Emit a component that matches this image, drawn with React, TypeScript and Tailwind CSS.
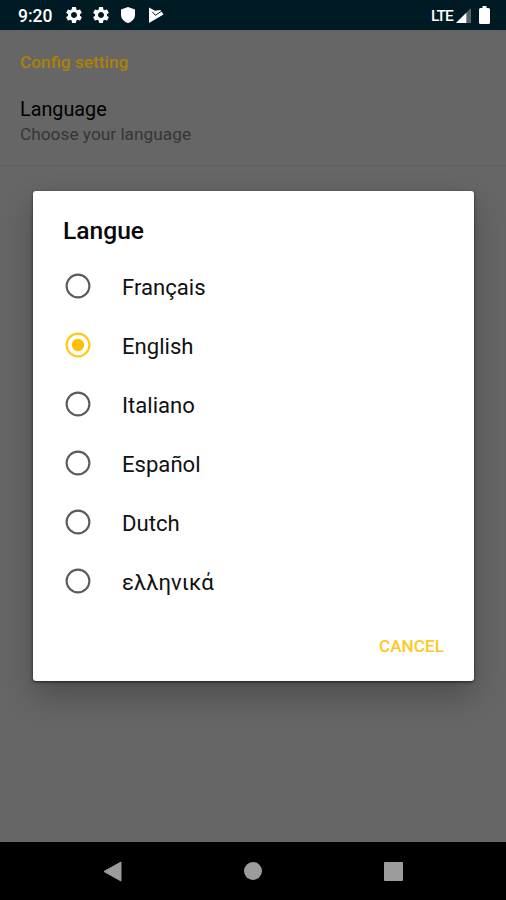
import { MdSettings } from 'react-icons/md';

const languages = ['Français', 'English', 'Italiano', 'Español', 'Dutch', 'ελληνικά'];

function StatusBar() {
  return (
    <header className="flex h-[30px] shrink-0 items-center justify-between bg-[#001a24] pl-[18px] pr-[16px] text-white">
      <div className="flex items-center">
        <span className="w-[46px] pt-[2px] text-[17.5px] font-medium leading-[30px]">9:20</span>
        <MdSettings className="mr-[7px] size-[20px]" />
        <MdSettings className="mr-[10px] size-[20px]" />
        <svg className="mr-[14px] h-[16px] w-[14px]" viewBox="0 0 14 16" fill="currentColor">
          <path d="M7 0 14 2.6V8c0 3.7-2.8 6.6-7 8-4.2-1.4-7-4.3-7-8V2.6Z" />
        </svg>
        <svg className="h-[16px] w-[15px]" viewBox="0 0 15 16" fill="currentColor">
          <path d="M0 0.500 6 3.7 11.500 3 14.500 7.500 0 16Z" />
          <path d="M3.300 4.800 6.400 8.300 13 3.800" fill="none" stroke="#001a24" strokeWidth="1" />
        </svg>
      </div>
      <div className="flex items-center">
        <span className="w-[25px] pt-[1px] text-[15.5px] font-medium leading-[30px] tracking-[-1px]">LTE</span>
        <svg className="mr-[8px] h-[15px] w-[15px]" viewBox="0 0 15 15">
          <path d="M0 15 15 0V15Z" fill="#53636a" />
          <path d="M0 15 10.3 4.7V15Z" fill="white" />
        </svg>
        <svg className="h-[18px] w-[11px]" viewBox="0 0 11 18" fill="currentColor">
          <path d="M3.500 0h4v2H9.5Q11 2 11 3.5v13Q11 18 9.5 18h-8Q0 18 0 16.500v-13Q0 2 1.500 2h2Z" />
        </svg>
      </div>
    </header>
  );
}

function LanguageDialog() {
  return (
    <section
      role="dialog"
      aria-labelledby="dialog-title"
      className="absolute left-[33px] top-[191px] flex h-[490px] w-[441px] flex-col rounded-[3px] bg-white shadow-[0_1px_3px_rgba(0,0,0,0.65),0_15px_32px_rgba(0,0,0,0.25)]"
    >
      <h1 id="dialog-title" className="mt-[22px] px-[30px] text-[24.6px] font-medium leading-[36px] text-[#080808]">
        Langue
      </h1>
      <div role="radiogroup" className="mt-[7px] flex flex-col">
        {languages.map((language) => {
          const selected = language === 'English';
          return (
            <div key={language} role="radio" aria-checked={selected} className="flex h-[59px] items-center pl-[32px]">
              <svg className="size-[26px]" viewBox="0 0 26 26">
                <circle cx="13" cy="13" r="11.4" fill="none" stroke={selected ? '#ffc814' : '#5b5b5b'} strokeWidth="2.1" />
                {selected && <circle cx="13" cy="13" r="6.2" fill="#ffc107" />}
              </svg>
              <span className="ml-[31px] pt-[2px] text-[22.1px] leading-[30px] text-[#111]">{language}</span>
            </div>
          );
        })}
      </div>
      <button className="ml-auto mr-[30px] mt-[24px] text-[17.2px] font-medium leading-[24px] text-[#ffc824]">CANCEL</button>
    </section>
  );
}

export default function App() {
  return (
    <main className="relative flex h-[900px] w-[506px] flex-col overflow-hidden bg-[#666] font-['Roboto','Noto_Sans',sans-serif]">
      <StatusBar />
      <div className="flex-1">
        <div className="h-[136px] border-b border-[#606060] px-[20px] pt-[20px]">
          <h2 className="text-[17.3px] font-medium leading-[24px] text-[#aa8206]">Config setting</h2>
          <p className="mt-[23px] text-[19.8px] leading-[26px] text-black">Language</p>
          <p className="-mt-px text-[17.3px] leading-[24px] text-[#363636]">Choose your language</p>
        </div>
      </div>
      <nav className="flex h-[58px] shrink-0 items-center justify-between bg-black pl-[103px] pr-[103px]">
        <svg className="h-[21px] w-[19px]" viewBox="0 0 19 21">
          <path d="M18 1V20L1 10.500Z" fill="#9c9c9c" stroke="#9c9c9c" strokeLinejoin="round" />
        </svg>
        <span className="size-[18px] rounded-full bg-[#9c9c9c]" />
        <span className="size-[19px] rounded-[1px] bg-[#9c9c9c]" />
      </nav>
      <LanguageDialog />
    </main>
  );
}
